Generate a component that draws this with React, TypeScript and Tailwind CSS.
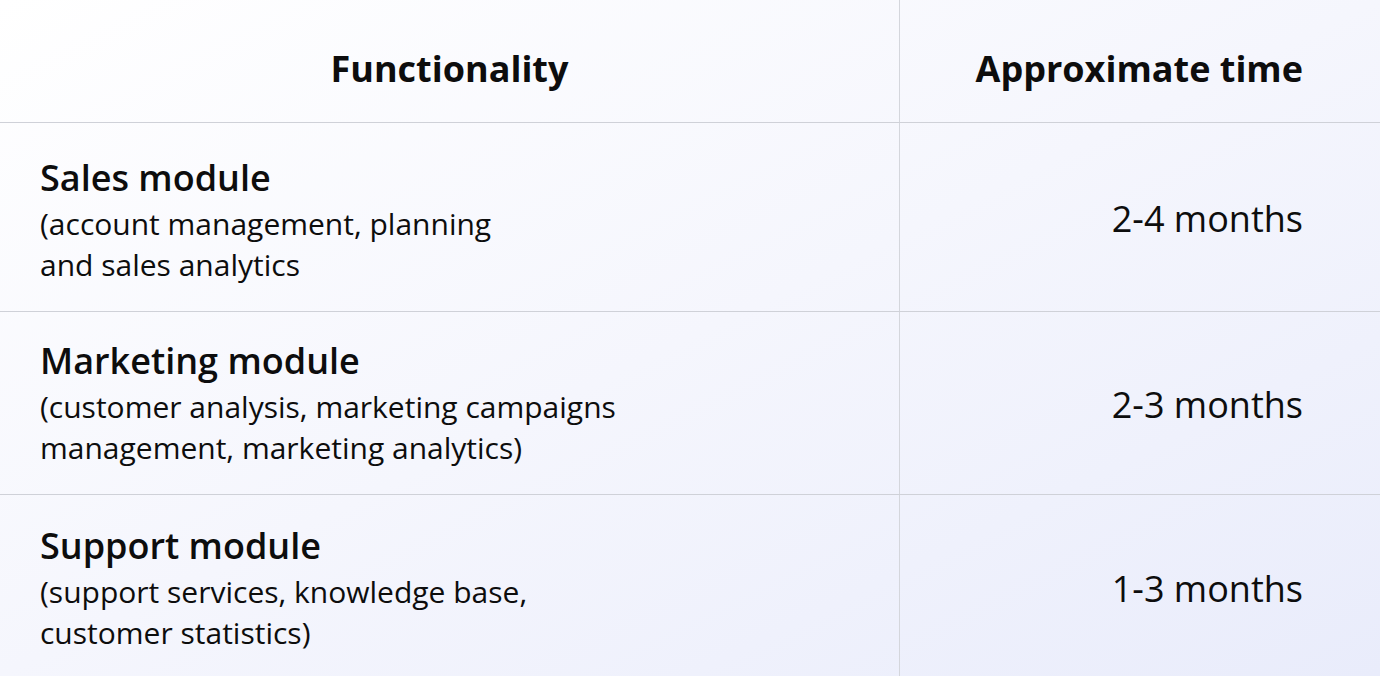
import React from "react";

const rows = [
  {
    title: "Sales module",
    desc: ["(account management, planning", "and sales analytics"],
    time: "2-4 months",
    h: "h-[189px]",
    pt: "pt-[34px]",
  },
  {
    title: "Marketing module",
    desc: ["(customer analysis, marketing campaigns", "management, marketing analytics)"],
    time: "2-3 months",
    h: "h-[183px]",
    pt: "pt-[28px]",
  },
  {
    title: "Support module",
    desc: ["(support services, knowledge base,", "customer statistics)"],
    time: "1-3 months",
    h: "h-[183px]",
    pt: "pt-[30px]",
  },
];

export default function App() {
  return (
    <div
      className="w-[1380px] h-[676px] overflow-hidden text-[#0d0d0d] bg-gradient-to-br from-[#ffffff] via-[#f5f6fd] to-[#e9ecfb]"
      style={{ fontFamily: '"Open Sans", "Noto Sans", sans-serif' }}
    >
      <div className="flex h-[123px] border-b border-[#cfd1d8]">
        <div className="w-[900px] border-r border-[#d4d6dc] flex justify-center pt-[46px]">
          <span className="text-[36px] font-bold leading-[46px]">Functionality</span>
        </div>
        <div className="flex-1 flex justify-end pr-[77px] pt-[46px]">
          <span className="text-[36px] font-bold leading-[46px]">Approximate time</span>
        </div>
      </div>
      {rows.map((r, i) => (
        <div
          key={i}
          className={`flex ${r.h} ${i < rows.length - 1 ? "border-b border-[#cfd1d8]" : ""}`}
        >
          <div className={`w-[900px] border-r border-[#d4d6dc] pl-[40px] ${r.pt}`}>
            <div className="text-[36px] font-semibold leading-[42px]">{r.title}</div>
            <div className="mt-[4px] text-[30px] leading-[41px]">
              {r.desc.map((d, j) => (
                <div key={j}>{d}</div>
              ))}
            </div>
          </div>
          <div className="flex-1 flex items-center justify-end pr-[77px] pt-[4px]">
            <span className="text-[36px] leading-[46px]">{r.time}</span>
          </div>
        </div>
      ))}
    </div>
  );
}
